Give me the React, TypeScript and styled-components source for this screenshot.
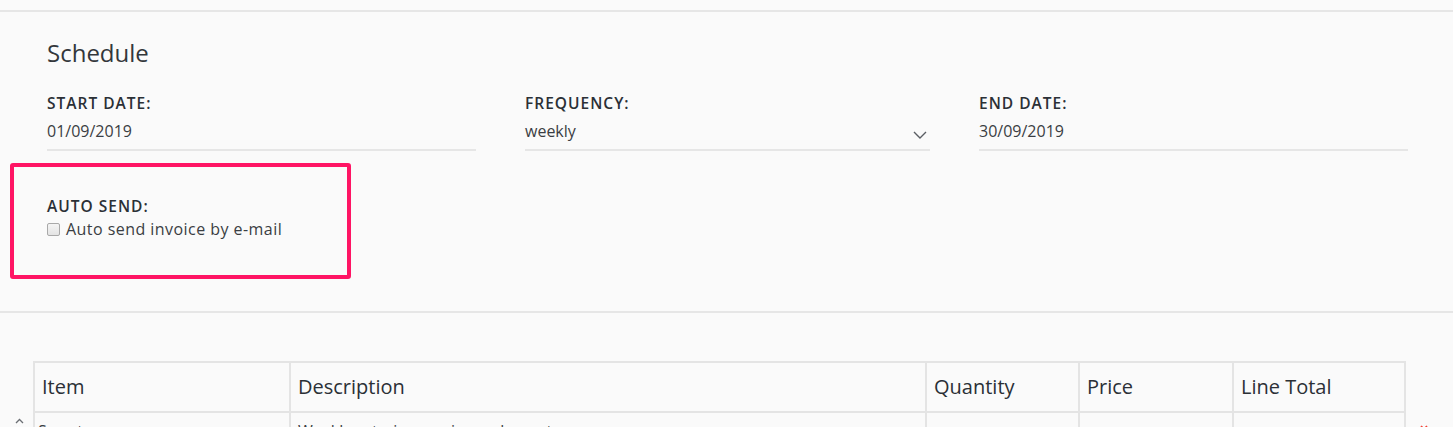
import React from "react";
import styled, { createGlobalStyle } from "styled-components";

const GlobalStyle = createGlobalStyle`
  html, body {
    margin: 0;
    padding: 0;
    background: #fafafa;
    font-family: "Open Sans", "Noto Sans", sans-serif;
    color: #2f3338;
    overflow: hidden;
  }
`;

const Page = styled.div`
  width: 1453px;
  height: 427px;
  padding-top: 10px;
  box-sizing: border-box;
  background: #fafafa;
  overflow: hidden;
`;

const ScheduleSection = styled.section`
  border-top: 2px solid #e6e6e6;
  border-bottom: 2px solid #e6e6e6;
  padding: 26px 0 32px 0;
`;

const Heading = styled.h2`
  margin: 0 0 25px 47px;
  font-size: 24px;
  line-height: 30px;
  font-weight: 400;
  color: #33373b;
`;

const Fields = styled.div`
  display: grid;
  grid-template-columns: 429px 405px 429px;
  column-gap: 49px;
  padding-left: 47px;
`;

const Field = styled.div`
  display: flex;
  flex-direction: column;
`;

const Label = styled.label`
  font-size: 15.5px;
  line-height: 20px;
  font-weight: 600;
  letter-spacing: 1px;
  text-transform: uppercase;
  color: #2b3036;
`;

const Value = styled.div`
  display: flex;
  align-items: center;
  justify-content: space-between;
  margin-top: 7px;
  padding-bottom: 7px;
  font-size: 16px;
  line-height: 22px;
  color: #3a3e43;
  border-bottom: 2px solid #e6e6e6;
`;

const Chevron = styled.svg`
  margin-right: 3px;
  margin-top: 7px;
`;

const AutoSendBox = styled.div`
  width: 300px;
  margin: 12px 0 0 10px;
  padding: 28px 0 35px 33px;
  border: 4px solid #ff1464;
  border-radius: 3px;
`;

const CheckRow = styled.label`
  display: flex;
  align-items: center;
  margin-top: 1px;
  font-size: 16px;
  line-height: 22px;
  letter-spacing: 0.45px;
  color: #3a3e43;
`;

const Box = styled.span`
  width: 11px;
  height: 11px;
  margin-right: 6px;
  border: 1px solid #a9a9a9;
  border-radius: 2px;
  background: linear-gradient(#f4f4f4, #e4e4e4);
`;

const TableArea = styled.div`
  display: grid;
  grid-template-columns: 33px 1371px 1fr;
  margin-top: 48px;
`;

const Gutter = styled.div<{ $side: "left" | "right" }>`
  position: relative;
  svg {
    position: absolute;
    top: ${(p) => (p.$side === "left" ? "57px" : "64px")};
    left: ${(p) => (p.$side === "left" ? "15px" : "16px")};
  }
`;

const Table = styled.table`
  width: 1371px;
  table-layout: fixed;
  border-collapse: collapse;
  border: 2px solid #e4e4e4;
`;

const HeadCell = styled.th`
  height: 46px;
  padding: 0 7px 2px;
  text-align: left;
  font-size: 20px;
  font-weight: 400;
  color: #2b3036;
  border: 2px solid #e4e4e4;
`;

const Cell = styled.td<{ $pad: number }>`
  height: 40px;
  vertical-align: top;
  padding: 7px ${(p) => p.$pad}px 0;
  font-size: 16px;
  line-height: 22px;
  color: #3a3e43;
  border: 2px solid #e4e4e4;
  white-space: nowrap;
  overflow: hidden;
`;

const columns = [
  { name: "Item", width: 256 },
  { name: "Description", width: 636 },
  { name: "Quantity", width: 153 },
  { name: "Price", width: 154 },
  { name: "Line Total", width: 172 },
];

const fields = [
  { label: "Start date:", value: "01/09/2019", select: false },
  { label: "Frequency:", value: "weekly", select: true },
  { label: "End date:", value: "30/09/2019", select: false },
];

const App: React.FC = () => {
  return (
    <Page>
      <GlobalStyle />
      <ScheduleSection>
        <Heading>Schedule</Heading>
        <Fields>
          {fields.map((f) => (
            <Field key={f.label}>
              <Label>{f.label}</Label>
              <Value>
                <span>{f.value}</span>
                {f.select ? (
                  <Chevron width="14" height="8" viewBox="0 0 14 8">
                    <polyline points="1,1 7,7 13,1" fill="none" stroke="#5a5e63" strokeWidth="1.4" />
                  </Chevron>
                ) : null}
              </Value>
            </Field>
          ))}
        </Fields>
        <AutoSendBox>
          <Label>Auto send:</Label>
          <CheckRow>
            <Box />
            Auto send invoice by e-mail
          </CheckRow>
        </AutoSendBox>
      </ScheduleSection>
      <TableArea>
        <Gutter $side="left">
          <svg width="9" height="6" viewBox="0 0 9 6">
            <polyline points="1,5 4.5,1.5 8,5" fill="none" stroke="#6b6f74" strokeWidth="1.3" />
          </svg>
        </Gutter>
        <Table>
          <colgroup>
            {columns.map((c) => (
              <col key={c.name} style={{ width: c.width }} />
            ))}
          </colgroup>
          <thead>
            <tr>
              {columns.map((c) => (
                <HeadCell key={c.name}>{c.name}</HeadCell>
              ))}
            </tr>
          </thead>
          <tbody>
            <tr>
              <Cell $pad={3}>Sweets</Cell>
              <Cell $pad={7}>Weekly catering service and sweets</Cell>
              <Cell $pad={7}></Cell>
              <Cell $pad={7}></Cell>
              <Cell $pad={7}></Cell>
            </tr>
          </tbody>
        </Table>
        <Gutter $side="right">
          <svg width="8" height="8" viewBox="0 0 8 8">
            <path d="M1 1 L7 7 M7 1 L1 7" stroke="#f44336" strokeWidth="1.6" />
          </svg>
        </Gutter>
      </TableArea>
    </Page>
  );
};

export default App;
